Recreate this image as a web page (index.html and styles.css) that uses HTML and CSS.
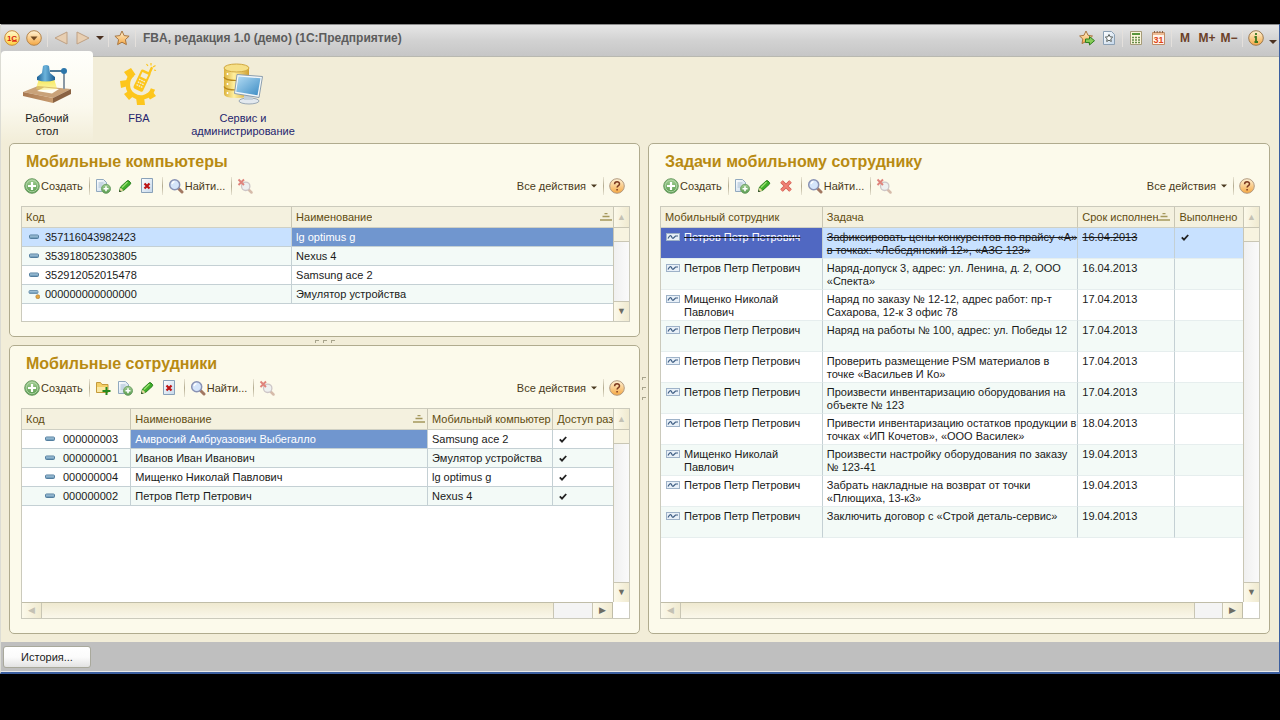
FILE: index.html
```html
<!DOCTYPE html>
<html lang="ru">
<head>
    <meta charset="UTF-8">
    <meta name="viewport" content="width=device-width, initial-scale=1.0">
    <title>FBA, редакция 1.0 (демо)</title>
    <link rel="stylesheet" href="styles.css">
</head>
<body>
    <!-- иконки -->
    <svg class="sprite" width="0" height="0" aria-hidden="true">
        <defs>
            <linearGradient id="gOrange" x1="0" y1="0" x2="0" y2="1"><stop offset="0" stop-color="#fff3d6"/><stop offset="1" stop-color="#f5a742"/></linearGradient>
            <linearGradient id="gYellow" x1="0" y1="0" x2="0" y2="1"><stop offset="0" stop-color="#fffbd0"/><stop offset="1" stop-color="#ffd040"/></linearGradient>
            <linearGradient id="gGreen" x1="0" y1="0" x2="0" y2="1"><stop offset="0" stop-color="#a5d096"/><stop offset="1" stop-color="#559a4c"/></linearGradient>
            <linearGradient id="gSheet" x1="0" y1="0" x2="1" y2="1"><stop offset="0" stop-color="#ffffff"/><stop offset="1" stop-color="#c4d7ea"/></linearGradient>
            <linearGradient id="gDash" x1="0" y1="0" x2="0" y2="1"><stop offset="0" stop-color="#b8d4e6"/><stop offset="1" stop-color="#5c8cae"/></linearGradient>
            <linearGradient id="gLamp" x1="0" y1="0" x2="1" y2="0"><stop offset="0" stop-color="#1c5f94"/><stop offset=".45" stop-color="#6cb4dc"/><stop offset="1" stop-color="#1a5b90"/></linearGradient>
            <linearGradient id="gLight" x1="0" y1="0" x2="0" y2="1"><stop offset="0" stop-color="#f8e850"/><stop offset="1" stop-color="#fffbd0" stop-opacity=".5"/></linearGradient>
            <linearGradient id="gWood" x1="0" y1="0" x2="1" y2="0"><stop offset="0" stop-color="#a87850"/><stop offset="1" stop-color="#c89c70"/></linearGradient>
            <linearGradient id="gBase" x1="0" y1="0" x2="1" y2="0"><stop offset="0" stop-color="#dcb23c"/><stop offset=".4" stop-color="#fff0a0"/><stop offset="1" stop-color="#d0a030"/></linearGradient>
            <linearGradient id="gScreen" x1="0" y1="0" x2="1" y2="1"><stop offset="0" stop-color="#b4dcf4"/><stop offset="1" stop-color="#3c8cc4"/></linearGradient>
        </defs>
        <symbol id="i-1c" viewBox="0 0 16 16">
            <circle cx="8" cy="8" r="7.3" fill="url(#gYellow)" stroke="#c98c3c"/>
            <text x="8" y="11" text-anchor="middle" font-family="Liberation Sans, sans-serif" font-size="8" font-weight="bold" fill="#d81e10">1С</text>
            <path d="M8 11.2h5" stroke="#d81e10"/>
        </symbol>
        <symbol id="i-menu" viewBox="0 0 16 16">
            <circle cx="8" cy="8" r="7.3" fill="url(#gOrange)" stroke="#b5854c"/>
            <path d="M4.5 6.5h7L8 10.5z" fill="#704820"/>
        </symbol>
        <symbol id="i-back" viewBox="0 0 16 16"><path d="M14 2v12L2 8z" fill="#e8cfb2" stroke="#bfa184"/></symbol>
        <symbol id="i-fwd" viewBox="0 0 16 16"><path d="M2 2v12l12-6z" fill="#e8cfb2" stroke="#bfa184"/></symbol>
        <symbol id="i-caret" viewBox="0 0 8 8"><path d="M0 2h8L4 6z" fill="currentColor"/></symbol>
        <symbol id="i-star" viewBox="0 0 16 16"><path d="M8 1l2.1 4.6 5 .6-3.7 3.4 1 5L8 12.2l-4.4 2.4 1-5L.9 6.2l5-.6z" fill="url(#gOrange)" stroke="#a87640"/></symbol>
        <symbol id="i-staradd" viewBox="0 0 16 16">
            <path d="M7 1l2 4.3 4.5.7-3.3 3 .8 4.6-4-2.1-4 2.1.8-4.6L.6 6 5 5.300z" fill="url(#gOrange)" stroke="#a87640"/>
            <path d="M6.5 9h4V6.500l5 4.200-5 4.300v-2.500h-4z" fill="#86cc58" stroke="#2f7f20"/>
        </symbol>
        <symbol id="i-favdoc" viewBox="0 0 16 16">
            <path d="M2.5 1.500h8l3 3v10h-11z" fill="url(#gSheet)" stroke="#8ba0b4"/>
            <path d="M8 4.500l1.100 2.300 2.600.300-1.900 1.800.500 2.600L8 10.200l-2.300 1.300.500-2.600-1.900-1.800 2.600-.300z" fill="#fff" stroke="#59605c"/>
        </symbol>
        <symbol id="i-calc" viewBox="0 0 16 16">
            <path d="M2.5 1.500h11v13h-11z" fill="#fbf6dc" stroke="#a59b78"/>
            <path d="M4 4h8" stroke="#58953b" stroke-width="2"/>
            <path d="M4 7.500h8M4 10h8M4 12.500h8" stroke="#658c48" stroke-width="1.5" stroke-dasharray="2 1"/>
        </symbol>
        <symbol id="i-cal" viewBox="0 0 16 16">
            <path d="M2.5 2.500h12v12h-12z" fill="#fff4ec" stroke="#c08c66"/>
            <path d="M3 4h11" stroke="#eebb94" stroke-width="2"/>
            <path d="M4.5 1v2M7.200 1v2M9.900 1v2M12.500 1v2" stroke="#8c6044"/>
            <text x="8.5" y="13" text-anchor="middle" font-family="Liberation Sans, sans-serif" font-size="9" font-weight="bold" fill="#e04418">31</text>
        </symbol>
        <symbol id="i-info" viewBox="0 0 16 16">
            <circle cx="8" cy="8" r="7.3" fill="url(#gOrange)" stroke="#9c7a50"/>
            <path d="M8 3v2M6.500 7H8v5M6.500 12h3.500" fill="none" stroke="#3c7820" stroke-width="1.8"/>
        </symbol>
        <symbol id="i-help" viewBox="0 0 16 16">
            <circle cx="8" cy="8" r="7.3" fill="url(#gOrange)" stroke="#b39a80"/>
            <path d="M5.6 6.200C5.600 3 10.600 3 10.500 6c0 1.700-2.400 1.600-2.400 3.600M8.100 11v1.600" fill="none" stroke="#7d3a20" stroke-width="1.5"/>
        </symbol>
        <symbol id="i-add" viewBox="0 0 16 16">
            <circle cx="8" cy="8" r="7.3" fill="url(#gGreen)" stroke="#6c9c64"/>
            <circle cx="8" cy="8" r="5.8" fill="none" stroke="#b8d8ae" stroke-width=".8"/>
            <path d="M8 4v8M4 8h8" stroke="#fff" stroke-width="2.2"/>
        </symbol>
        <symbol id="i-copy" viewBox="0 0 16 16">
            <path d="M1.5 1.500h7l3 3v9h-10z" fill="url(#gSheet)" stroke="#91a9bf"/>
            <path d="M3.5 5h5M3.500 7h4M3.500 9h3" stroke="#a8bed2"/>
            <circle cx="11" cy="10.8" r="4.5" fill="url(#gGreen)" stroke="#71a16a"/>
            <path d="M11 8.300v5M8.500 10.800h5" stroke="#fff" stroke-width="1.6"/>
        </symbol>
        <symbol id="i-pencil" viewBox="0 0 16 16">
            <path d="M2.5 13.500l1-4.500 6.500-6q1-.8 2 0l1.300 1.300q.8 1 0 2l-6.500 6z" fill="#3fae2a" stroke="#267c1c"/>
            <path d="M5 9.500l5.500-5.500" stroke="#98e070" stroke-width="1.5"/>
            <path d="M2.5 13.500l1-4 3 3z" fill="#e8d8a0"/>
            <path d="M2 14l.7-2 1.500 1.500z" fill="#2a3820"/>
        </symbol>
        <symbol id="i-delmark" viewBox="0 0 16 16">
            <path d="M2.5 .5h11v14h-11z" fill="url(#gSheet)" stroke="#89a1b8"/>
            <path d="M5.500 5.500l5 5M10.500 5.500l-5 5" stroke="#bd1414" stroke-width="2.2"/>
        </symbol>
        <symbol id="i-del" viewBox="0 0 16 16">
            <path d="M3.500 3.500l9 9M12.500 3.500l-9 9" stroke="#cf5a50" stroke-width="3.6"/>
            <path d="M3.500 3.500l9 9M12.500 3.500l-9 9" stroke="#f08074" stroke-width="2"/>
        </symbol>
        <symbol id="i-find" viewBox="0 0 16 16">
            <path d="M10.500 10.500l3.500 3.500" stroke="#a27862" stroke-width="3" stroke-linecap="round"/>
            <circle cx="6.7" cy="6.7" r="5" fill="#d5e5fa" stroke="#8992b4" stroke-width="1.5"/>
            <path d="M4 6q.5-2 2.500-2.500" fill="none" stroke="#fff" stroke-width="1.3"/>
        </symbol>
        <symbol id="i-nofind" viewBox="0 0 16 16">
            <g opacity=".65">
                <path d="M11.500 11.500l3 3" stroke="#c29a88" stroke-width="2.5" stroke-linecap="round"/>
                <circle cx="8.7" cy="8.3" r="4.2" fill="#e8ecf2" stroke="#b4aab4" stroke-width="1.3"/>
                <path d="M1.500 1.500l5.500 5.500M7 1.500L1.500 7" stroke="#d04440" stroke-width="1.9"/>
            </g>
        </symbol>
        <symbol id="i-folder" viewBox="0 0 16 16">
            <path d="M1.500 12.500v-10h4l1.500 2h6v8z" fill="#f4cf66" stroke="#c49a3c"/>
            <path d="M2 12V7h10.500v5z" fill="#fbe9a4"/>
            <path d="M11.500 7v8M7.500 11h8" stroke="#278a1e" stroke-width="2"/>
        </symbol>
        <symbol id="i-item" viewBox="0 0 12 10"><rect x="1.5" y="3" width="9" height="3.5" rx="1" fill="url(#gDash)" stroke="#537e9f"/></symbol>
        <symbol id="i-itemdot" viewBox="0 0 12 10">
            <rect x="1" y="1.5" width="9" height="3" rx="1" fill="url(#gDash)" stroke="#7196b0"/>
            <circle cx="9.8" cy="7.7" r="2" fill="#e5a640" stroke="#a97a32" stroke-width=".6"/>
        </symbol>
        <symbol id="i-task" viewBox="0 0 14 8">
            <rect x=".5" y=".5" width="13" height="7" fill="#e8f0f8" stroke="#9eb2c8"/>
            <path d="M2 5.500q2.500-4.500 3.500-2t2 1.500T9.500 3h2.500" fill="none" stroke="#3f5e84" stroke-width="1.2"/>
        </symbol>
        <symbol id="i-check" viewBox="0 0 8 8"><path d="M.8 3.800L3 6.200 7.200 1.500" fill="none" stroke="#222" stroke-width="1.8"/></symbol>
        <symbol id="i-sort" viewBox="0 0 12 8"><path d="M4.500 .5h3M2.500 3.500h7M0 7h12" stroke="#a4985c" stroke-width="1.4"/></symbol>

        <symbol id="n-desk" viewBox="0 0 48 42">
            <path d="M16 16h15l4 12H12z" fill="url(#gLight)"/>
            <path d="M0 29l15-6 33 3-18 9z" fill="#c9a279"/>
            <path d="M14 28l7-3.500 15 1.500-7 4.500z" fill="#fffef4"/>
            <path d="M16 16h15l3 10-16 1-5-1z" fill="#f8e850" opacity=".4"/>
            <path d="M0 29l30 6v5L0 33z" fill="url(#gWood)"/>
            <path d="M30 35l18-9v5l-18 9z" fill="#8a6242"/>
            <path d="M41 8v18" stroke="#8a98a4" stroke-width="2"/>
            <path d="M27 8h13" stroke="#39698c" stroke-width="1.8"/>
            <circle cx="41" cy="8" r="3" fill="#2c76aa"/>
            <path d="M20 3q3-2 6 0l1 7 5 4v3q-9 3-18 0v-3l5-4z" fill="url(#gLamp)"/>
        </symbol>
        <symbol id="n-fba" viewBox="0 0 38 42">
            <path d="M12.500 11.500A13 13 0 1 0 33 26" fill="none" stroke="#fdc61c" stroke-width="4.500"/>
            <path d="M4 9l7-4 4.500 6.500-6 5zM0 18l7-1 1 6-7 2zM4 31l6-4 4.500 5-5.500 5zM16 34h8l1 8h-8zM26 31l6-3 4 5-6 3.500z" fill="#fdc61c"/>
            <g transform="rotate(25 22 17)">
                <rect x="17" y="7" width="10.5" height="21" rx="2" fill="#fdc61c"/>
                <rect x="24.5" y="1" width="2.5" height="8" rx="1" fill="#fdc61c"/>
                <rect x="19" y="9.5" width="6.5" height="5" fill="#f2edd8"/>
                <path d="M19 17.500h6.500M19 20.500h6.500M19 23.500h6.500" stroke="#f2edd8" stroke-width="1.3" stroke-dasharray="1.600 .8"/>
            </g>
            <path d="M26.500 1l1.500 2M31 0v2.500M35.500 2.500L33 4M34 7l2 .5" stroke="#fdc61c" stroke-width="1.2"/>
        </symbol>
        <symbol id="n-service" viewBox="0 0 40 42">
            <path d="M1 5v26q0 4 12.500 4T26 31V5z" fill="url(#gBase)"/>
            <path d="M1 14q1 3.500 12.500 3.500T26 14M1 23.500Q2 27 13.500 27T26 23.500" fill="none" stroke="#b98a1c" stroke-width="1.2"/>
            <ellipse cx="13.5" cy="5" rx="12.5" ry="4" fill="#f6e088" stroke="#d0a840"/>
            <path d="M4.500 10v2M4.500 20v2M4.500 29v2" stroke="#fff" stroke-width="1.5"/>
            <ellipse cx="26" cy="38" rx="10" ry="3" fill="#e3e9ef" stroke="#9aa8b5"/>
            <path d="M21 32h8l1 5h-9z" fill="#c4d0da"/>
            <path d="M14 11.500l25.500 2-3.500 21-24.500-4z" fill="#f4f8fa" stroke="#8c9eae"/>
            <path d="M15.500 13.500l22 1.800-3 17-21.300-3.600z" fill="url(#gScreen)"/>
        </symbol>
    </svg>

    <div class="app">
        <header class="titlebar">
            <button class="ico-btn" aria-label="Главное меню"><svg class="ico"><use href="#i-1c"/></svg></button>
            <button class="ico-btn" aria-label="Меню"><svg class="ico"><use href="#i-menu"/></svg></button>
            <span class="tsep"></span>
            <button class="ico-btn" aria-label="Назад"><svg class="ico"><use href="#i-back"/></svg></button>
            <button class="ico-btn" aria-label="Вперед"><svg class="ico"><use href="#i-fwd"/></svg></button>
            <button class="caret-btn" aria-label="История переходов"><svg class="caret"><use href="#i-caret"/></svg></button>
            <span class="tsep"></span>
            <button class="ico-btn" aria-label="Избранное"><svg class="ico"><use href="#i-star"/></svg></button>
            <span class="tsep"></span>
            <h1 class="app-title">FBA, редакция 1.0 (демо) (1С:Предприятие)</h1>
            <button class="ico-btn" aria-label="Добавить в избранное"><svg class="ico"><use href="#i-staradd"/></svg></button>
            <button class="ico-btn" aria-label="Список избранного"><svg class="ico"><use href="#i-favdoc"/></svg></button>
            <span class="tsep"></span>
            <button class="ico-btn" aria-label="Калькулятор"><svg class="ico"><use href="#i-calc"/></svg></button>
            <button class="ico-btn" aria-label="Календарь"><svg class="ico"><use href="#i-cal"/></svg></button>
            <span class="tsep"></span>
            <button class="mem-btn">M</button>
            <button class="mem-btn">M+</button>
            <button class="mem-btn">M−</button>
            <span class="tsep"></span>
            <button class="ico-btn" aria-label="О программе"><svg class="ico"><use href="#i-info"/></svg></button>
            <button class="caret-btn low" aria-label="Еще"><svg class="caret"><use href="#i-caret"/></svg></button>
        </header>

        <nav class="sections">
            <a href="#" class="section active"><svg class="section-ico"><use href="#n-desk"/></svg>Рабочий<br>стол</a>
            <a href="#" class="section"><svg class="section-ico"><use href="#n-fba"/></svg>FBA</a>
            <a href="#" class="section wide"><svg class="section-ico"><use href="#n-service"/></svg>Сервис и<br>администрирование</a>
        </nav>

        <main class="workspace">
            <div class="left">
                <section class="panel">
                    <h2>Мобильные компьютеры</h2>
                    <div class="toolbar">
                        <button class="tbtn"><svg class="ico"><use href="#i-add"/></svg>Создать</button>
                        <span class="sep"></span>
                        <button class="ico-btn" aria-label="Скопировать"><svg class="ico"><use href="#i-copy"/></svg></button>
                        <button class="ico-btn" aria-label="Изменить"><svg class="ico"><use href="#i-pencil"/></svg></button>
                        <button class="ico-btn" aria-label="Пометить на удаление"><svg class="ico"><use href="#i-delmark"/></svg></button>
                        <span class="sep"></span>
                        <button class="tbtn"><svg class="ico"><use href="#i-find"/></svg>Найти...</button>
                        <span class="sep"></span>
                        <button class="ico-btn" aria-label="Отменить поиск"><svg class="ico"><use href="#i-nofind"/></svg></button>
                        <button class="tbtn actions">Все действия<svg class="caret small"><use href="#i-caret"/></svg></button>
                        <span class="sep"></span>
                        <button class="ico-btn" aria-label="Справка"><svg class="ico"><use href="#i-help"/></svg></button>
                    </div>
                    <div class="list">
                        <div class="list-body">
                            <table class="grid computers">
                                <colgroup><col class="c-code"><col></colgroup>
                                <thead>
                                    <tr><th>Код</th><th><div class="sorted"><span>Наименование</span><svg class="sort"><use href="#i-sort"/></svg></div></th></tr>
                                </thead>
                                <tbody>
                                    <tr class="selected"><td><div class="item"><svg class="mark"><use href="#i-item"/></svg>357116043982423</div></td><td class="current">lg optimus g</td></tr>
                                    <tr><td><div class="item"><svg class="mark"><use href="#i-item"/></svg>353918052303805</div></td><td>Nexus 4</td></tr>
                                    <tr><td><div class="item"><svg class="mark"><use href="#i-item"/></svg>352912052015478</div></td><td>Samsung ace 2</td></tr>
                                    <tr><td><div class="item"><svg class="mark"><use href="#i-itemdot"/></svg>000000000000000</div></td><td>Эмулятор устройства</td></tr>
                                </tbody>
                            </table>
                        </div>
                        <div class="vscroll">
                            <button class="sbtn off" aria-label="Вверх">▲</button>
                            <span class="vthumb"></span>
                            <button class="sbtn down" aria-label="Вниз">▼</button>
                        </div>
                    </div>
                </section>

                <div class="hsplit"><i></i><i></i><i></i></div>

                <section class="panel">
                    <h2>Мобильные сотрудники</h2>
                    <div class="toolbar">
                        <button class="tbtn"><svg class="ico"><use href="#i-add"/></svg>Создать</button>
                        <span class="sep"></span>
                        <button class="ico-btn" aria-label="Создать группу"><svg class="ico"><use href="#i-folder"/></svg></button>
                        <button class="ico-btn" aria-label="Скопировать"><svg class="ico"><use href="#i-copy"/></svg></button>
                        <button class="ico-btn" aria-label="Изменить"><svg class="ico"><use href="#i-pencil"/></svg></button>
                        <button class="ico-btn" aria-label="Пометить на удаление"><svg class="ico"><use href="#i-delmark"/></svg></button>
                        <span class="sep"></span>
                        <button class="tbtn"><svg class="ico"><use href="#i-find"/></svg>Найти...</button>
                        <span class="sep"></span>
                        <button class="ico-btn" aria-label="Отменить поиск"><svg class="ico"><use href="#i-nofind"/></svg></button>
                        <button class="tbtn actions">Все действия<svg class="caret small"><use href="#i-caret"/></svg></button>
                        <span class="sep"></span>
                        <button class="ico-btn" aria-label="Справка"><svg class="ico"><use href="#i-help"/></svg></button>
                    </div>
                    <div class="list with-hscroll">
                        <div class="list-body">
                            <table class="grid staff">
                                <colgroup><col class="c-code"><col class="c-name"><col class="c-device"><col></colgroup>
                                <thead>
                                    <tr><th>Код</th><th><div class="sorted"><span>Наименование</span><svg class="sort"><use href="#i-sort"/></svg></div></th><th>Мобильный компьютер</th><th>Доступ раз</th></tr>
                                </thead>
                                <tbody>
                                    <tr><td><div class="item"><svg class="mark"><use href="#i-item"/></svg>000000003</div></td><td class="current">Амвросий Амбруазович Выбегалло</td><td>Samsung ace 2</td><td><svg class="check" role="img" aria-label="Да"><use href="#i-check"/></svg></td></tr>
                                    <tr><td><div class="item"><svg class="mark"><use href="#i-item"/></svg>000000001</div></td><td>Иванов Иван Иванович</td><td>Эмулятор устройства</td><td><svg class="check" role="img" aria-label="Да"><use href="#i-check"/></svg></td></tr>
                                    <tr><td><div class="item"><svg class="mark"><use href="#i-item"/></svg>000000004</div></td><td>Мищенко Николай Павлович</td><td>lg optimus g</td><td><svg class="check" role="img" aria-label="Да"><use href="#i-check"/></svg></td></tr>
                                    <tr><td><div class="item"><svg class="mark"><use href="#i-item"/></svg>000000002</div></td><td>Петров Петр Петрович</td><td>Nexus 4</td><td><svg class="check" role="img" aria-label="Да"><use href="#i-check"/></svg></td></tr>
                                </tbody>
                            </table>
                        </div>
                        <div class="vscroll">
                            <button class="sbtn off" aria-label="Вверх">▲</button>
                            <span class="vthumb"></span>
                            <button class="sbtn down" aria-label="Вниз">▼</button>
                        </div>
                        <div class="hscroll">
                            <button class="sbtn off" aria-label="Влево">◀</button>
                            <div class="htrack"><span class="hthumb"></span></div>
                            <button class="sbtn right" aria-label="Вправо">▶</button>
                        </div>
                    </div>
                </section>
            </div>

            <div class="vsplit"><i></i><i></i><i></i></div>

            <section class="panel">
                <h2>Задачи мобильному сотруднику</h2>
                <div class="toolbar">
                    <button class="tbtn"><svg class="ico"><use href="#i-add"/></svg>Создать</button>
                    <span class="sep"></span>
                    <button class="ico-btn" aria-label="Скопировать"><svg class="ico"><use href="#i-copy"/></svg></button>
                    <button class="ico-btn" aria-label="Изменить"><svg class="ico"><use href="#i-pencil"/></svg></button>
                    <button class="ico-btn" aria-label="Удалить"><svg class="ico"><use href="#i-del"/></svg></button>
                    <span class="sep"></span>
                    <button class="tbtn"><svg class="ico"><use href="#i-find"/></svg>Найти...</button>
                    <span class="sep"></span>
                    <button class="ico-btn" aria-label="Отменить поиск"><svg class="ico"><use href="#i-nofind"/></svg></button>
                    <button class="tbtn actions">Все действия<svg class="caret small"><use href="#i-caret"/></svg></button>
                    <span class="sep"></span>
                    <button class="ico-btn" aria-label="Справка"><svg class="ico"><use href="#i-help"/></svg></button>
                </div>
                <div class="list with-hscroll">
                    <div class="list-body">
                        <table class="grid tasks">
                            <colgroup><col class="c-person"><col class="c-task"><col class="c-date"><col></colgroup>
                            <thead>
                                <tr><th>Мобильный сотрудник</th><th>Задача</th><th><div class="sorted"><span>Срок исполнения</span><svg class="sort"><use href="#i-sort"/></svg></div></th><th>Выполнено</th></tr>
                            </thead>
                            <tbody>
                                <tr class="selected done"><td class="current"><div class="item"><svg class="mark"><use href="#i-task"/></svg>Петров Петр Петрович</div></td><td>Зафиксировать цены конкурентов по прайсу «А» в точках: «Лебедянский 12», «АЗС 123»</td><td>16.04.2013</td><td><svg class="check" role="img" aria-label="Да"><use href="#i-check"/></svg></td></tr>
                                <tr><td><div class="item"><svg class="mark"><use href="#i-task"/></svg>Петров Петр Петрович</div></td><td>Наряд-допуск 3, адрес: ул. Ленина, д. 2, ООО «Спекта»</td><td>16.04.2013</td><td></td></tr>
                                <tr><td><div class="item"><svg class="mark"><use href="#i-task"/></svg>Мищенко Николай Павлович</div></td><td>Наряд по заказу № 12-12, адрес работ: пр-т Сахарова, 12-к 3 офис 78</td><td>17.04.2013</td><td></td></tr>
                                <tr><td><div class="item"><svg class="mark"><use href="#i-task"/></svg>Петров Петр Петрович</div></td><td>Наряд на работы № 100, адрес: ул. Победы 12</td><td>17.04.2013</td><td></td></tr>
                                <tr><td><div class="item"><svg class="mark"><use href="#i-task"/></svg>Петров Петр Петрович</div></td><td>Проверить размещение PSM материалов в точке «Васильев И Ко»</td><td>17.04.2013</td><td></td></tr>
                                <tr><td><div class="item"><svg class="mark"><use href="#i-task"/></svg>Петров Петр Петрович</div></td><td>Произвести инвентаризацию оборудования на объекте № 123</td><td>17.04.2013</td><td></td></tr>
                                <tr><td><div class="item"><svg class="mark"><use href="#i-task"/></svg>Петров Петр Петрович</div></td><td>Привести инвентаризацию остатков продукции в точках «ИП Кочетов», «ООО Василек»</td><td>18.04.2013</td><td></td></tr>
                                <tr><td><div class="item"><svg class="mark"><use href="#i-task"/></svg>Мищенко Николай Павлович</div></td><td>Произвести настройку оборудования по заказу № 123-41</td><td>19.04.2013</td><td></td></tr>
                                <tr><td><div class="item"><svg class="mark"><use href="#i-task"/></svg>Петров Петр Петрович</div></td><td>Забрать накладные на возврат от точки «Плющиха, 13-к3»</td><td>19.04.2013</td><td></td></tr>
                                <tr><td><div class="item"><svg class="mark"><use href="#i-task"/></svg>Петров Петр Петрович</div></td><td>Заключить договор с «Строй деталь-сервис»</td><td>19.04.2013</td><td></td></tr>
                            </tbody>
                        </table>
                    </div>
                    <div class="vscroll">
                        <button class="sbtn off" aria-label="Вверх">▲</button>
                        <span class="vthumb"></span>
                        <button class="sbtn down" aria-label="Вниз">▼</button>
                    </div>
                    <div class="hscroll">
                        <button class="sbtn off" aria-label="Влево">◀</button>
                        <div class="htrack"><span class="hthumb long"></span></div>
                        <button class="sbtn right" aria-label="Вправо">▶</button>
                    </div>
                </div>
            </section>
        </main>

        <footer class="statusbar">
            <button class="history">История...</button>
        </footer>
    </div>
</body>
</html>
```

FILE: styles.css
```css
* {
    box-sizing: border-box;
}

body {
    margin: 0;
    padding: 24px 0 46px;
    height: 100vh;
    background: #000;
    color: #1a1a1a;
    font-family: "Liberation Sans", Arial, sans-serif;
    font-size: 11px;
    line-height: 13px;
}

button {
    margin: 0;
    padding: 0;
    border: none;
    background: none;
    color: inherit;
    font: inherit;
    cursor: pointer;
}

.sprite {
    position: absolute;
}

.app {
    display: flex;
    flex-direction: column;
    height: 100%;
    background: #f2edd8;
    border-left: 1px solid #dcdcd4;
    border-right: 1px solid #3c5f9f;
    border-bottom: 2px solid #3c5f9f;
}

.ico {
    display: block;
    width: 16px;
    height: 16px;
    flex: none;
}

.ico-btn {
    display: flex;
    align-items: center;
    justify-content: center;
    flex: none;
    width: 22px;
    height: 22px;
}

.caret {
    display: block;
    width: 8px;
    height: 8px;
}

/* title bar */
.titlebar {
    display: flex;
    align-items: center;
    flex: none;
    height: 33px;
    padding-bottom: 5px;
    background: linear-gradient(#e6e6e6, #d2d2d2 50%, #c6c6c6);
    border-top: 1px solid #8c8c8c;
    border-bottom: 1px solid #b8b8b0;
    color: #4a3020;
}

.tsep {
    width: 1px;
    height: 18px;
    margin: 0 2px;
    background: #e4e0dc;
}

.caret-btn {
    width: 12px;
    padding: 0 2px;
}

.caret-btn.low {
    padding-top: 8px;
}

.app-title {
    flex: 1;
    margin: 0 0 0 5px;
    font-size: 12px;
    color: #5c5c5c;
}

.mem-btn {
    width: 22px;
    font-size: 12px;
    font-weight: bold;
    color: #6b4028;
}

/* sections */
.sections {
    display: flex;
    flex: none;
    height: 86px;
}

.section {
    display: flex;
    flex-direction: column;
    align-items: center;
    width: 92px;
    padding-top: 6px;
    text-align: center;
    text-decoration: none;
    color: #25256e;
}

.section.wide {
    width: 116px;
}

.section.active {
    margin-top: -6px;
    padding-top: 12px;
    border-radius: 4px 4px 0 0;
    background: linear-gradient(#fffffb, #fbf9ee 60%, #f2edd8);
    color: #1a1a1a;
}

.section-ico {
    flex: none;
    width: 48px;
    height: 42px;
    margin-bottom: 7px;
}

/* workspace */
.workspace {
    display: grid;
    grid-template-columns: minmax(0, 631fr) 8px minmax(0, 622fr);
    flex: 1;
    min-height: 0;
    padding: 0 9px 8px 8px;
}

.left {
    display: grid;
    grid-template-rows: minmax(0, 194fr) 8px minmax(0, 289fr);
    min-height: 0;
}

.hsplit,
.vsplit {
    display: flex;
    align-items: center;
    justify-content: center;
    gap: 4px;
}

.vsplit {
    flex-direction: column;
    gap: 7px;
}

.hsplit i,
.vsplit i {
    width: 4px;
    height: 3px;
    border-top: 1px solid #a8a48c;
    border-left: 1px solid #a8a48c;
}

.panel {
    display: flex;
    flex-direction: column;
    min-height: 0;
    padding: 8px 9px 14px 11px;
    border: 1px solid #b0ab8e;
    border-radius: 5px;
    background: #fcfaeb;
}

.panel h2 {
    margin: 0 0 0 5px;
    font-size: 16px;
    line-height: 20px;
    color: #b88a12;
}

.toolbar {
    display: flex;
    align-items: center;
    flex: none;
    height: 28px;
    margin-bottom: 6px;
    padding-right: 2px;
    color: #4a3a20;
}

.tbtn {
    display: flex;
    align-items: center;
    gap: 1px;
    padding: 0 2px 0 3px;
}

.sep {
    width: 1px;
    height: 18px;
    margin: 0 2px 0 4px;
    background: linear-gradient(#e8e4d4, #b4ac90, #e8e4d4);
}

.actions {
    margin-left: auto;
    gap: 5px;
}

.caret.small {
    width: 6px;
    height: 6px;
}

/* lists */
.list {
    display: grid;
    grid-template-columns: minmax(0, 1fr) 16px;
    grid-template-rows: minmax(0, 1fr);
    flex: 1;
    min-height: 0;
    border: 1px solid #cbcabc;
    background: #fff;
}

.list.with-hscroll {
    grid-template-rows: minmax(0, 1fr) 16px;
}

.list-body {
    overflow: hidden;
}

.grid {
    width: 100%;
    table-layout: fixed;
    border-collapse: separate;
    border-spacing: 0;
}

.grid th {
    height: 21px;
    padding: 0 4px;
    border-right: 1px solid #c9c6b4;
    border-bottom: 1px solid #cfd0c4;
    background: #f4f1df;
    color: #5f4c10;
    font-weight: normal;
    text-align: left;
    white-space: nowrap;
    overflow: hidden;
}

.grid td {
    height: 19px;
    padding: 0 4px;
    border-right: 1px solid #c4d0d4;
    border-bottom: 1px solid #c4d0d4;
}

.grid th:last-child,
.grid td:last-child {
    border-right: none;
}

.grid th:last-child {
    padding-right: 0;
}

.grid tbody tr:nth-child(even) {
    background: #f3faf7;
}

.grid tbody tr.selected {
    background: #c8e1ff;
}

.grid td.current {
    background: #7096cf;
    color: #fff;
}

.sorted {
    display: flex;
    align-items: center;
    justify-content: space-between;
}

.sorted span {
    overflow: hidden;
}

.sort {
    flex: none;
    width: 12px;
    height: 8px;
}

.item {
    display: flex;
    align-items: center;
    gap: 5px;
    padding-left: 2px;
}

.mark {
    flex: none;
    width: 12px;
    height: 10px;
}

.check {
    display: block;
    width: 8px;
    height: 9px;
    margin-left: 2px;
}

.computers .c-code {
    width: 45.7%;
}

.computers .sorted {
    padding-right: 1px;
}

.staff th {
    padding-right: 2px;
}

.staff .c-code {
    width: 18.5%;
}

.staff .c-name {
    width: 50.2%;
}

.staff .c-device {
    width: 21.2%;
}

.staff .item {
    gap: 7px;
    padding-left: 18px;
}

.tasks .c-person {
    width: 27.8%;
}

.tasks .c-task {
    width: 43.9%;
}

.tasks .c-date {
    width: 16.7%;
}

.tasks td {
    height: 31px;
    padding: 3px 0 1px 4px;
    border-bottom-color: #e6eeee;
    vertical-align: top;
}

.tasks td.current {
    background: #5068c2;
}

.tasks .done {
    text-decoration: line-through;
}

.tasks .item {
    align-items: flex-start;
    gap: 4px;
    padding-left: 1px;
}

.tasks .mark {
    width: 14px;
    height: 8px;
    margin-top: 2px;
}

.tasks .check {
    margin-top: 2px;
}

/* scroll bars */
.vscroll {
    display: flex;
    flex-direction: column;
    border-left: 1px solid #c9c6b4;
    background: linear-gradient(90deg, #f0f0f0, #fafafa);
}

.sbtn {
    display: flex;
    align-items: center;
    justify-content: center;
    flex: none;
    height: 20px;
    background: linear-gradient(90deg, #fcf9ea, #f0ead0);
    color: #6c6c64;
    font-size: 9px;
    line-height: 9px;
}

.sbtn.off {
    color: #c4c1b4;
}

.sbtn.down {
    margin-top: auto;
    border-top: 1px solid #c9c6b4;
}

.vthumb {
    height: 15px;
    border: solid #c9c6b4;
    border-width: 1px 0;
    background: #f7f3e0;
}

.hscroll {
    display: flex;
    border: solid #c0bda8;
    border-width: 1px 1px 0 0;
}

.hscroll .sbtn {
    width: 20px;
    height: 15px;
    border-right: 1px solid #c9c6b4;
}

.hscroll .sbtn.right {
    border-right: none;
    border-left: 1px solid #c9c6b4;
}

.htrack {
    display: flex;
    flex: 1;
    background: #f4f4f4;
}

.hthumb {
    width: 93%;
    border-right: 1px solid #c9c6b4;
    background: linear-gradient(#efe9d0, #faf7ea);
}

.hthumb.long {
    width: 95%;
}

/* bottom bar */
.statusbar {
    flex: none;
    height: 30px;
    padding: 4px 2px;
    background: #bfbfbf;
    border-bottom: 1px solid #e8e8e8;
}

.history {
    width: 88px;
    height: 22px;
    border: 1px solid #a9a99c;
    border-radius: 3px;
    background: linear-gradient(#fff, #fbfbfb 50%, #e2e2e2);
}
```
